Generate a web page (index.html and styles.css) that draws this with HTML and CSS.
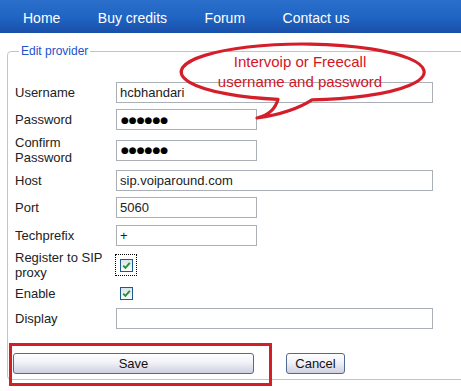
FILE: index.html
```html
<!DOCTYPE html>
<html>
<head>
<meta charset="utf-8">
<link rel="stylesheet" href="styles.css">
</head>
<body>
<div class="page">
  <nav class="nav">
    <a class="nav-item">Home</a>
    <a class="nav-item">Buy credits</a>
    <a class="nav-item">Forum</a>
    <a class="nav-item">Contact us</a>
  </nav>
  <fieldset class="box">
    <legend class="legend">Edit provider</legend>
    <div class="form">
      <label class="lbl">Username</label>
      <input class="field long" type="text" value="hcbhandari">
      <label class="lbl">Password</label>
      <input class="field short dots" type="text" value="●●●●●●">
      <label class="lbl">Confirm<br>Password</label>
      <input class="field short dots" type="text" value="●●●●●●">
      <label class="lbl">Host</label>
      <input class="field long" type="text" value="sip.voiparound.com">
      <label class="lbl">Port</label>
      <input class="field short" type="text" value="5060">
      <label class="lbl">Techprefix</label>
      <input class="field short" type="text" value="+">
      <label class="lbl">Register to SIP<br>proxy</label>
      <span class="focusbox"><span class="cb"><svg width="11" height="11" viewBox="0 0 11 11"><path d="M2.2 5.6 L4.4 7.8 L8.8 2.8" fill="none" stroke="#1f9a2a" stroke-width="1.9"/></svg></span></span>
      <label class="lbl">Enable</label>
      <span class="cb cb-plain"><svg width="11" height="11" viewBox="0 0 11 11"><path d="M2.2 5.6 L4.4 7.8 L8.8 2.8" fill="none" stroke="#1f9a2a" stroke-width="1.9"/></svg></span>
      <label class="lbl">Display</label>
      <input class="field long" type="text" value="">
    </div>
    <div class="actions">
      <span class="highlight"></span>
      <button class="btn btn-save">Save</button>
      <button class="btn btn-cancel">Cancel</button>
    </div>
  </fieldset>
  <svg class="bubble" width="461" height="391" viewBox="0 0 461 391">
    <path d="M278 99.4 A121.5 28 0 1 1 312 99.9 Q292 113 257 118 Q274 114 278 99.4 Z" fill="none" stroke="#d41f2b" stroke-width="3.2" stroke-linejoin="round"/>
  </svg>
  <div class="bubble-text">Intervoip or Freecall<br>username and password</div>
</div>
</body>
</html>
```
FILE: styles.css
```css
html, body {
  margin: 0;
  padding: 0;
  background: #fff;
  overflow: hidden;
}
.page {
  position: relative;
  width: 461px;
  height: 391px;
  overflow: hidden;
  font-family: "Liberation Sans", Arial, sans-serif;
}
.nav {
  display: flex;
  gap: 37.5px;
  height: 33px;
  box-sizing: border-box;
  padding: 3px 0 0 23px;
  background: linear-gradient(#2c6fcb, #1f64c3 55%, #1a4fa7);
}
.nav-item {
  color: #fff;
  font-size: 14px;
  line-height: 30px;
  text-decoration: none;
}
.box {
  margin: 11px 0 0 7px;
  width: 480px;
  box-sizing: border-box;
  padding: 21px 0 5px 7px;
  border: 1px solid #c4c4c4;
  border-radius: 4px;
  min-inline-size: 0;
}
.legend {
  margin-left: 4px;
  padding: 0 2px;
  font-size: 12px;
  line-height: 14px;
  color: #2352c9;
}
.form {
  display: grid;
  grid-template-columns: 101px auto;
  grid-template-rows: 27px 27px 34px 27px 27px 28px 32px 25px 25px;
  align-items: center;
}
.lbl {
  font-size: 13px;
  line-height: 15px;
  color: #222;
}
.field {
  box-sizing: border-box;
  height: 21px;
  margin: 0;
  padding: 0 3px;
  border: 1px solid #aab0b6;
  font-family: "Liberation Sans", Arial, sans-serif;
  font-size: 13px;
  color: #222;
  background: #fff;
  outline: none;
  justify-self: start;
}
.long { width: 317px; }
.short { width: 141px; }
.dots {
  font-family: "DejaVu Sans", sans-serif;
  font-size: 9px;
  color: #000;
  padding-left: 4px;
}
.focusbox {
  justify-self: start;
  margin-left: -1px;
  width: 22px;
  height: 22px;
  box-sizing: border-box;
  border: 1px dotted #000;
  padding: 4px 0 0 4px;
}
.cb {
  display: flex;
  align-items: center;
  justify-content: center;
  width: 13px;
  height: 13px;
  box-sizing: border-box;
  border: 1px solid #1d5b8e;
  background: linear-gradient(#dde4ec, #fafbfc);
}
.cb-plain {
  justify-self: start;
  margin-left: 4px;
}
.actions {
  position: relative;
  display: flex;
  margin-top: 22px;
}
.btn {
  height: 21px;
  box-sizing: border-box;
  margin: 0;
  padding: 0;
  border: 1px solid #4d6b93;
  border-radius: 3px;
  background: linear-gradient(#ffffff, #f1f1f8 45%, #cfcfe0);
  font-family: "Liberation Sans", Arial, sans-serif;
  font-size: 13px;
  color: #111;
}
.btn-save {
  width: 241px;
  margin-left: -2px;
}
.btn-cancel {
  width: 59px;
  margin-left: 32px;
}
.highlight {
  position: absolute;
  left: -6px;
  top: -10px;
  width: 263px;
  height: 43px;
  box-sizing: border-box;
  border: 3px solid #d21f26;
}
.bubble {
  position: absolute;
  left: 0;
  top: 0;
  pointer-events: none;
}
.bubble-text {
  position: absolute;
  left: 180px;
  top: 52px;
  width: 240px;
  text-align: center;
  font-size: 15px;
  line-height: 20px;
  color: #d4141f;
}
```
